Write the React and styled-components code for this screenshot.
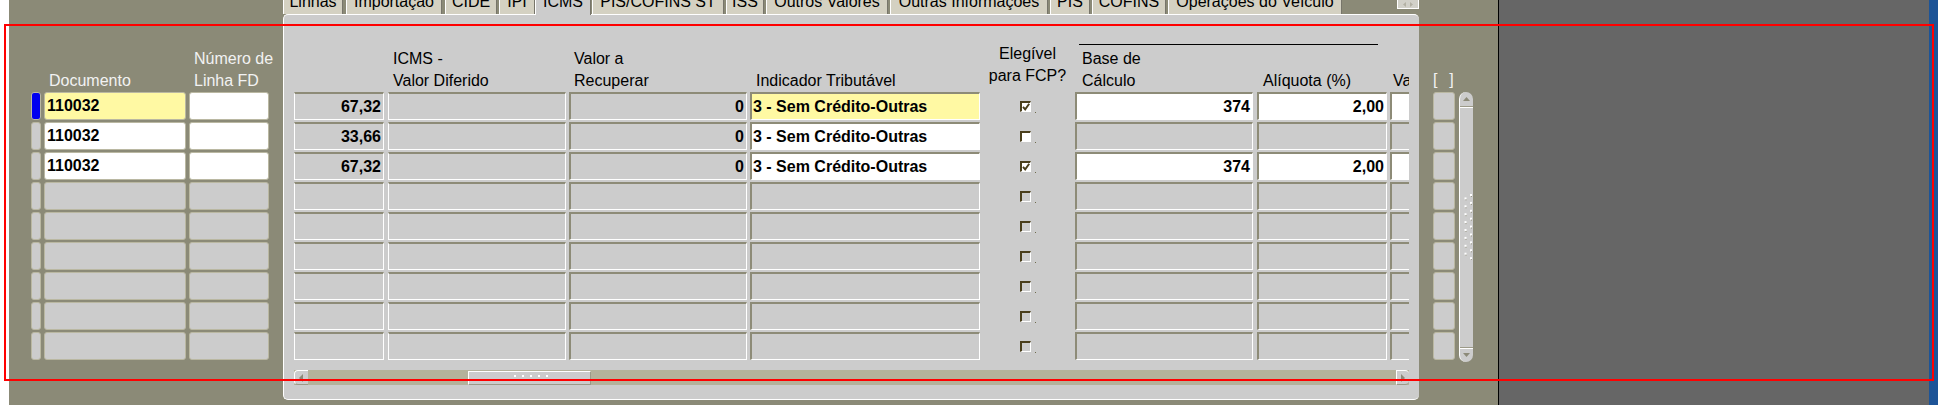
import React from 'react';
import styled, { createGlobalStyle } from 'styled-components';

const GlobalStyle = createGlobalStyle`
  html, body {
    margin: 0;
    padding: 0;
    background: #ffffff;
  }
  body {
    font-family: "Liberation Sans", Arial, sans-serif;
    font-size: 16px;
  }
`;

const TONES = {
  yellow: '#fff9a3',
  white: '#ffffff',
  gray: '#cccccc',
};

const TABS = [
  { label: 'Linhas', w: 60, gap: 0 },
  { label: 'Importação', w: 96, gap: 3 },
  { label: 'CIDE', w: 52, gap: 3 },
  { label: 'IPI', w: 36, gap: 2 },
  { label: 'ICMS', w: 56, gap: 0, active: true },
  { label: 'PIS/COFINS ST', w: 132, gap: 1 },
  { label: 'ISS', w: 38, gap: 2 },
  { label: 'Outros Valores', w: 122, gap: 2 },
  { label: 'Outras Informações', w: 158, gap: 2 },
  { label: 'PIS', w: 40, gap: 2 },
  { label: 'COFINS', w: 74, gap: 2 },
  { label: 'Operações do Veículo', w: 174, gap: 2 },
];

const RECORDS = [
  { doc: '110032', valor: '67,32', recuperar: '0', indicador: '3 - Sem Crédito-Outras', fcp: true, base: '374', aliquota: '2,00' },
  { doc: '110032', valor: '33,66', recuperar: '0', indicador: '3 - Sem Crédito-Outras', fcp: false },
  { doc: '110032', valor: '67,32', recuperar: '0', indicador: '3 - Sem Crédito-Outras', fcp: true, base: '374', aliquota: '2,00' },
];

const ROWS = [...RECORDS, ...Array(6).fill(null)];
const CURRENT = 0;

function App() {
  return (
    <>
      <GlobalStyle />
      <Screen>
        <WhiteEdge />
        <Workspace>
          <LeftBlock>
            <HeadRow>
              <HeadCell $w={10} />
              <HeadCell $w={142} $gap={3} $pad={5} $light>
                <HeadLine>Documento</HeadLine>
              </HeadCell>
              <HeadCell $w={80} $gap={3} $pad={5} $light>
                <HeadLine>Número de</HeadLine>
                <HeadLine>Linha FD</HeadLine>
              </HeadCell>
            </HeadRow>
            <RowList>
              {ROWS.map((r, i) => (
                <LeftRow key={i}>
                  <Indicator $current={i === CURRENT} />
                  <LeftField $w={142} $tone={r ? (i === CURRENT ? 'yellow' : 'white') : 'gray'}>
                    {r?.doc}
                  </LeftField>
                  <LeftField $w={80} $tone={r ? 'white' : 'gray'} />
                </LeftRow>
              ))}
            </RowList>
          </LeftBlock>

          <TabWidget>
            <TabStrip>
              {TABS.map((t) => (
                <Tab key={t.label} $w={t.w} $gap={t.gap} $active={t.active}>
                  {t.label}
                </Tab>
              ))}
              <TabScroller>
                <svg width="14" height="7" viewBox="0 0 14 7">
                  <polygon points="5,1 5,6 2,3.5" fill="#b3b1a4" />
                  <polygon points="9,1 9,6 12,3.5" fill="#b3b1a4" />
                </svg>
              </TabScroller>
            </TabStrip>

            <Canvas>
              <Viewport>
                <CanvasHead>
                  <HeadCell $w={90} />
                  <HeadCell $w={178} $gap={4} $pad={5}>
                    <HeadLine>ICMS -</HeadLine>
                    <HeadLine>Valor Diferido</HeadLine>
                  </HeadCell>
                  <HeadCell $w={178} $gap={3} $pad={5}>
                    <HeadLine>Valor a</HeadLine>
                    <HeadLine>Recuperar</HeadLine>
                  </HeadCell>
                  <HeadCell $w={230} $gap={3} $pad={6}>
                    <HeadLine>Indicador Tributável</HeadLine>
                  </HeadCell>
                  <HeadCell $w={95} $center $lift={5}>
                    <HeadLine>Elegível</HeadLine>
                    <HeadLine>para FCP?</HeadLine>
                  </HeadCell>
                  <HeadGroup>
                    <GroupRule />
                    <GroupLabels>
                      <HeadCell $w={178} $pad={7}>
                        <HeadLine>Base de</HeadLine>
                        <HeadLine>Cálculo</HeadLine>
                      </HeadCell>
                      <HeadCell $w={130} $gap={4} $pad={6}>
                        <HeadLine>Alíquota (%)</HeadLine>
                      </HeadCell>
                    </GroupLabels>
                  </HeadGroup>
                  <HeadCell $w={100} $gap={3} $pad={3}>
                    <HeadLine>Valor</HeadLine>
                  </HeadCell>
                </CanvasHead>

                <RowList>
                  {ROWS.map((r, i) => {
                    const entry = r ? (i === CURRENT ? 'yellow' : 'white') : 'gray';
                    const rate = r?.base ? 'white' : 'gray';
                    return (
                      <CanvasRow key={i}>
                        <Cell $w={90} $flat $right>{r?.valor}</Cell>
                        <Cell $w={178} $gap={4} $flat />
                        <Cell $w={178} $gap={3} $right>{r?.recuperar}</Cell>
                        <Cell $w={230} $gap={3} $tone={entry}>{r?.indicador}</Cell>
                        <CheckCell>
                          <CheckGroup>
                            <CheckBox $enabled={!!r}>
                              {r?.fcp && (
                                <svg width="8" height="8" viewBox="0 0 8 8">
                                  <path d="M1 3.8 L3.2 6.4 L7.2 0.8" fill="none" stroke="#4a3f1c" strokeWidth="1.9" />
                                </svg>
                              )}
                            </CheckBox>
                            <FocusDot />
                          </CheckGroup>
                        </CheckCell>
                        <Cell $w={178} $right $tone={rate}>{r?.base}</Cell>
                        <Cell $w={130} $gap={4} $right $tone={rate}>{r?.aliquota}</Cell>
                        <Cell $w={100} $gap={3} $tone={rate} />
                      </CanvasRow>
                    );
                  })}
                </RowList>
              </Viewport>

              <HScroll>
                <HArrow $side="left">
                  <svg width="5" height="8" viewBox="0 0 5 8">
                    <polygon points="4,0 4,8 0,4" fill="#8c8a78" />
                  </svg>
                </HArrow>
                <HThumb $offset={160}>
                  <svg width="40" height="8" viewBox="0 0 40 8">
                    {[0, 1, 2, 3, 4].map((k) => (
                      <g key={k}>
                        <rect x={4 + k * 8} y={1} width={2} height={2} fill="#ffffff" />
                        <rect x={1 + k * 8} y={5} width={1} height={2} fill="#9a9886" />
                      </g>
                    ))}
                  </svg>
                </HThumb>
                <HArrow $side="right">
                  <svg width="5" height="8" viewBox="0 0 5 8">
                    <polygon points="0,0 0,8 4,4" fill="#8c8a78" />
                  </svg>
                </HArrow>
              </HScroll>
            </Canvas>
          </TabWidget>

          <SideBlock>
            <HeadRow>
              <HeadCell $w={22} $pad={0} $light>
                <Brackets>[&nbsp;&nbsp;]</Brackets>
              </HeadCell>
            </HeadRow>
            <RowList>
              {ROWS.map((_, i) => (
                <SideBox key={i} />
              ))}
            </RowList>
          </SideBlock>

          <VScroll>
            <VArrow>
              <svg width="7" height="4" viewBox="0 0 7 4">
                <polygon points="0,4 7,4 3.5,0" fill="#8c8a78" />
              </svg>
            </VArrow>
            <VThumb>
              <svg width="12" height="66" viewBox="0 0 12 66">
                {Array.from({ length: 9 }).map((_, k) => (
                  <g key={k}>
                    <rect x={9} y={k * 7.9} width={2} height={2} fill="#ffffff" />
                    <rect x={10} y={k * 7.9 + 2} width={1} height={1} fill="#9a9886" />
                    {k < 8 && (
                      <>
                        <rect x={3.5} y={k * 7.9 + 3.4} width={2} height={2} fill="#ffffff" />
                        <rect x={4.5} y={k * 7.9 + 5.4} width={1} height={1} fill="#9a9886" />
                      </>
                    )}
                  </g>
                ))}
              </svg>
            </VThumb>
            <VArrow $bottom>
              <svg width="7" height="4" viewBox="0 0 7 4">
                <polygon points="0,0 7,0 3.5,4" fill="#8c8a78" />
              </svg>
            </VArrow>
          </VScroll>
        </Workspace>
        <Divider />
        <Backdrop />
        <BlueEdge />
        <Annotation />
      </Screen>
    </>
  );
}

export default App;

const Screen = styled.div`
  position: relative;
  display: flex;
  width: 1938px;
  height: 405px;
  overflow: hidden;
  font-family: "Liberation Sans", Arial, sans-serif;
  font-size: 16px;
`;

const WhiteEdge = styled.div`
  width: 9px;
  flex-shrink: 0;
  background: #ffffff;
`;

const Workspace = styled.div`
  width: 1489px;
  flex-shrink: 0;
  height: 100%;
  display: flex;
  align-items: flex-start;
  background: #8b8a77;
`;

const Divider = styled.div`
  width: 1px;
  flex-shrink: 0;
  background: #000000;
`;

const Backdrop = styled.div`
  flex: 1;
  background: #666666;
`;

const BlueEdge = styled.div`
  width: 9px;
  flex-shrink: 0;
  background: #1d5497;
`;

const Annotation = styled.div`
  position: absolute;
  left: 4px;
  top: 24px;
  width: 1930px;
  height: 357px;
  box-sizing: border-box;
  border: 2px solid #ff0000;
  pointer-events: none;
`;

const LeftBlock = styled.div`
  margin-left: 22px;
  display: flex;
  flex-direction: column;
`;

const HeadRow = styled.div`
  height: 92px;
  display: flex;
  align-items: stretch;
`;

const HeadCell = styled.div`
  flex-shrink: 0;
  box-sizing: border-box;
  width: ${(p) => p.$w}px;
  margin-left: ${(p) => p.$gap || 0}px;
  padding-left: ${(p) => p.$pad || 0}px;
  padding-bottom: ${(p) => p.$lift || 0}px;
  display: flex;
  flex-direction: column;
  justify-content: flex-end;
  align-items: ${(p) => (p.$center ? 'center' : 'flex-start')};
  line-height: 22px;
  white-space: nowrap;
  color: ${(p) => (p.$light ? '#f2f2f2' : '#000000')};
`;

const HeadLine = styled.span`
  display: block;
`;

const Brackets = styled.span`
  display: block;
  letter-spacing: 1px;
  margin-bottom: 1px;
`;

const RowList = styled.div`
  display: flex;
  flex-direction: column;
  gap: 2px;
`;

const LeftRow = styled.div`
  display: flex;
  gap: 3px;
  height: 28px;
`;

const Indicator = styled.div`
  box-sizing: border-box;
  width: 10px;
  height: 28px;
  border: 1px solid #bab8a2;
  border-radius: 3px;
  background: ${(p) => (p.$current ? '#0000f0' : '#cccccc')};
`;

const LeftField = styled.div`
  box-sizing: border-box;
  width: ${(p) => p.$w}px;
  height: 28px;
  padding: 0 2px;
  border: 1px solid #bab8a2;
  border-radius: 3px;
  background: ${(p) => TONES[p.$tone]};
  font-weight: bold;
  line-height: 26px;
  color: #000000;
  white-space: nowrap;
  overflow: hidden;
`;

const TabWidget = styled.div`
  margin-left: 14px;
  width: 1136px;
  flex-shrink: 0;
  display: flex;
  flex-direction: column;
`;

const TabStrip = styled.div`
  position: relative;
  z-index: 1;
  height: 14px;
  display: flex;
  align-items: flex-start;
`;

const Tab = styled.div`
  flex-shrink: 0;
  box-sizing: border-box;
  width: ${(p) => p.$w}px;
  margin-left: ${(p) => p.$gap}px;
  height: ${(p) => (p.$active ? 15 : 14)}px;
  background: ${(p) => (p.$active ? '#cccccc' : '#d4d1c2')};
  border-left: 1px solid #ffffff;
  border-right: 1px solid #77756a;
  text-align: center;
  line-height: 4px;
  white-space: nowrap;
  color: #000000;
`;

const TabScroller = styled.div`
  margin-left: auto;
  box-sizing: border-box;
  width: 22px;
  height: 9px;
  border: 1px solid #ffffff;
  border-top: none;
  background: #d2d1c9;
  display: flex;
  align-items: center;
  justify-content: center;
`;

const Canvas = styled.div`
  box-sizing: border-box;
  height: 386px;
  padding-left: 10px;
  background: #cccccc;
  border-top: 1px solid #ffffff;
  border-left: 1px solid #ffffff;
  border-bottom: 1px solid #ffffff;
  border-radius: 5px;
  display: flex;
  flex-direction: column;
`;

const Viewport = styled.div`
  width: 1115px;
  overflow: hidden;
`;

const CanvasHead = styled.div`
  height: 77px;
  display: flex;
  align-items: stretch;
`;

const HeadGroup = styled.div`
  flex-shrink: 0;
  width: 312px;
  display: flex;
  flex-direction: column;
`;

const GroupRule = styled.div`
  height: 1px;
  margin: 29px 9px 0 4px;
  background: #000000;
`;

const GroupLabels = styled.div`
  margin-top: auto;
  display: flex;
`;

const CanvasRow = styled.div`
  display: flex;
  height: 28px;
`;

const Cell = styled.div`
  flex-shrink: 0;
  box-sizing: border-box;
  width: ${(p) => p.$w}px;
  margin-left: ${(p) => p.$gap || 0}px;
  height: 28px;
  padding: 0 2px 0 1px;
  background: ${(p) => TONES[p.$tone || 'gray']};
  border-top: 2px solid #8d8b77;
  border-left: ${(p) => (p.$flat ? '1px solid #ffffff' : '2px solid #8d8b77')};
  border-right: 1px solid #ffffff;
  border-bottom: 1px solid #ffffff;
  font-weight: bold;
  line-height: 25px;
  text-align: ${(p) => (p.$right ? 'right' : 'left')};
  color: #000000;
  white-space: nowrap;
  overflow: hidden;
`;

const CheckCell = styled.div`
  flex-shrink: 0;
  width: 95px;
  height: 28px;
  display: flex;
  align-items: center;
  justify-content: center;
`;

const CheckGroup = styled.div`
  display: flex;
  align-items: flex-end;
`;

const CheckBox = styled.span`
  box-sizing: border-box;
  width: 11px;
  height: 11px;
  background: ${(p) => (p.$enabled ? '#ffffff' : '#cccccc')};
  border-top: 2px solid #4a3f1c;
  border-left: 2px solid #4a3f1c;
  border-right: 1px solid #ffffff;
  border-bottom: 1px solid #ffffff;
  display: flex;
  align-items: center;
  justify-content: center;
`;

const FocusDot = styled.span`
  width: 1px;
  height: 1px;
  margin-left: 4px;
  margin-bottom: -1px;
  background: #6e6a4c;
`;

const HScroll = styled.div`
  margin-top: 10px;
  width: 1115px;
  height: 15px;
  display: flex;
  background: #b4b29b;
`;

const HArrow = styled.div`
  box-sizing: border-box;
  width: ${(p) => (p.$side === 'left' ? 14 : 13)}px;
  height: 15px;
  margin-left: ${(p) => (p.$side === 'right' ? 'auto' : '0')};
  background: #cccccc;
  border-top: 1px solid #ffffff;
  border-left: 1px solid #ffffff;
  border-bottom: 1px solid #9c9a88;
  border-radius: ${(p) => (p.$side === 'left' ? '4px 0 0 4px' : '0 4px 4px 0')};
  display: flex;
  align-items: center;
  justify-content: center;
`;

const HThumb = styled.div`
  box-sizing: border-box;
  width: 123px;
  height: 14px;
  margin-top: 1px;
  margin-left: ${(p) => p.$offset}px;
  background: #cccccc;
  border-top: 1px solid #ffffff;
  border-left: 1px solid #ffffff;
  border-right: 1px solid #9c9a88;
  border-bottom: 1px solid #9c9a88;
  display: flex;
  align-items: center;
  justify-content: center;
`;

const SideBlock = styled.div`
  margin-left: 14px;
  display: flex;
  flex-direction: column;
`;

const SideBox = styled.div`
  box-sizing: border-box;
  width: 22px;
  height: 28px;
  border: 1px solid #bab8a2;
  border-radius: 3px;
  background: #cccccc;
`;

const VScroll = styled.div`
  box-sizing: border-box;
  margin-top: 92px;
  margin-left: 4px;
  width: 14px;
  height: 270px;
  background: #cccccc;
  border-left: 1px solid #ffffff;
  border-radius: 7px;
  display: flex;
  flex-direction: column;
`;

const VArrow = styled.div`
  height: 14px;
  display: flex;
  align-items: center;
  justify-content: center;
  border-bottom: ${(p) => (p.$bottom ? 'none' : '1px solid #9c9a88')};
  border-top: ${(p) => (p.$bottom ? '1px solid #9c9a88' : 'none')};
  box-shadow: ${(p) => (p.$bottom ? 'inset 0 1px 0 #ffffff' : '0 1px 0 #ffffff')};
`;

const VThumb = styled.div`
  flex: 1;
  display: flex;
  align-items: center;
  justify-content: center;
`;
